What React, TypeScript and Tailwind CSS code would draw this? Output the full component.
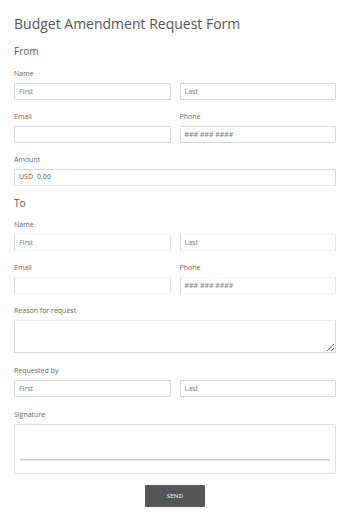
import React from 'react'

const font = { fontFamily: '"Open Sans", "Liberation Sans", sans-serif' }

function Label({ children }: { children: React.ReactNode }) {
  return <div className="h-[10px] leading-[10px] text-[7px] text-[#666666] mb-[4px]">{children}</div>
}

function Input({ placeholder, faded }: { placeholder?: string; faded?: boolean }) {
  return (
    <input
      readOnly
      placeholder={placeholder}
      className={`block w-full h-[17px] px-[4px] text-[7px] bg-white outline-none placeholder:text-[#777777] border rounded-[1px] ${
        faded ? 'border-[#f1f1f1] border-l-[#d4d4d4] border-r-[#e4e4e4]' : 'border-[#d6d6d6]'
      }`}
    />
  )
}

function NameRow({ faded }: { faded?: boolean }) {
  return (
    <div className="grid grid-cols-2 gap-x-[9px] mb-[12px]">
      <div>
        <Label>Name</Label>
        <Input placeholder="First" faded={faded} />
      </div>
      <div>
        <div className="h-[14px]" />
        <Input placeholder="Last" faded={faded} />
      </div>
    </div>
  )
}

function ContactRow({ faded }: { faded?: boolean }) {
  return (
    <div className="grid grid-cols-2 gap-x-[9px] mb-[12px]">
      <div>
        <Label>Email</Label>
        <Input faded={faded} />
      </div>
      <div>
        <Label>Phone</Label>
        <Input placeholder="### ### ####" faded={faded} />
      </div>
    </div>
  )
}

export default function App() {
  return (
    <div className="w-[350px] h-[520px] bg-white px-[14px] pt-[14px]" style={font}>
      <h1 className="text-[14px] leading-[20px] text-[#555555] font-normal">Budget Amendment Request Form</h1>

      <h2 className="mt-[10px] mb-[11px] text-[10px] leading-[14px] text-[#555555]">From</h2>
      <NameRow />
      <ContactRow />

      <div className="mb-[10px]">
        <Label>Amount</Label>
        <div className="flex items-center h-[17px] px-[4px] border border-[#d6d6d6] border-b-[#ececec] text-[7px] text-[#555555]">
          <span>USD</span>
          <span className="ml-[4px] text-[#555555]">0.00</span>
        </div>
      </div>

      <h2 className="mb-[10px] text-[10px] leading-[14px] text-[#555555]">To</h2>
      <NameRow faded />
      <ContactRow faded />

      <div className="mb-[13px]">
        <Label>Reason for request</Label>
        <textarea
          readOnly
          className="block w-full h-[33px] border border-[#d6d6d6] border-t-[#efefef] bg-white outline-none resize-y"
        />
      </div>

      <div className="grid grid-cols-2 gap-x-[9px] mb-[13px]">
        <div>
          <Label>Requested by</Label>
          <Input placeholder="First" />
        </div>
        <div>
          <div className="h-[14px]" />
          <Input placeholder="Last" />
        </div>
      </div>

      <div className="mb-[11px]">
        <Label>Signature</Label>
        <div className="h-[50px] border border-[#dedede] rounded-[1px] flex flex-col justify-end px-[5px] pb-[12px]">
          <div className="h-[2px] bg-[#c8c8c8] border-b border-[#e4e4e4]" />
        </div>
      </div>

      <div className="flex justify-center">
        <button className="w-[60px] h-[22px] bg-[#555555] text-white text-[6px] tracking-[0.3px] rounded-[1px]">
          SEND
        </button>
      </div>
    </div>
  )
}
